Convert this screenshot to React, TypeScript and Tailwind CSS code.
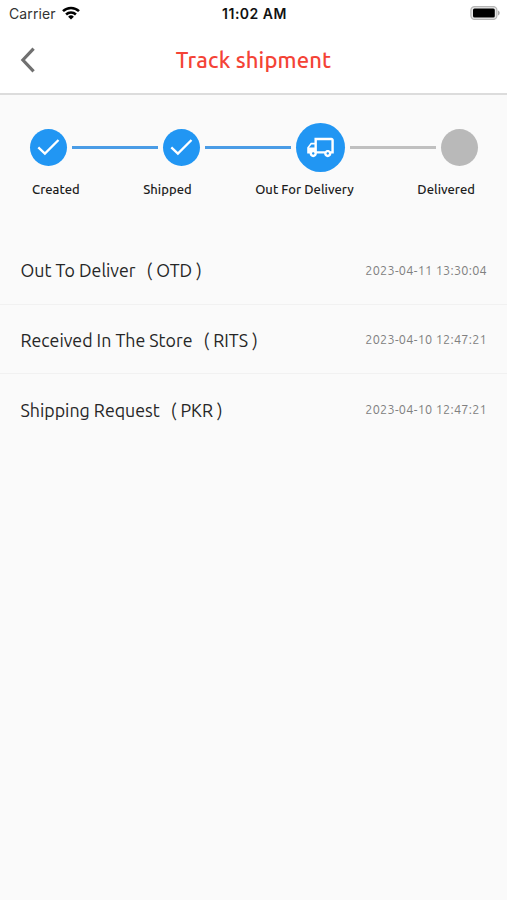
import React from 'react';
import { MdOutlineLocalShipping } from 'react-icons/md';

interface ShipmentEvent {
  title: string;
  code: string;
  date: string;
}

const events: ShipmentEvent[] = [
  { title: 'Out To Deliver', code: '( OTD )', date: '2023-04-11 13:30:04' },
  { title: 'Received In The Store', code: '( RITS )', date: '2023-04-10 12:47:21' },
  { title: 'Shipping Request', code: '( PKR )', date: '2023-04-10 12:47:21' },
];

const StatusBar: React.FC = () => (
  <div className="grid h-[27px] grid-cols-3 items-center pl-[9px] pr-[7px] font-['Inter','Liberation_Sans',sans-serif] text-[#111]">
    <div className="flex items-center gap-[6px]">
      <span className="text-[14px] leading-none tracking-[0.1px] text-[#333]">Carrier</span>
      <svg className="mb-[2px]" width="18" height="14" viewBox="0 0 18 14" fill="none" stroke="#000" strokeWidth="2.5">
        <path d="M1 5.2a11.3 11.3 0 0 1 16 0" />
        <path d="M4.1 8.5a6.9 6.9 0 0 1 9.8 0" />
        <path d="M9 13.6 6.1 10.7a4.1 4.1 0 0 1 5.8 0z" fill="#000" stroke="none" />
      </svg>
    </div>
    <span className="text-center text-[14px] font-semibold leading-none tracking-[0.5px]">11:02 AM</span>
    <svg className="mb-[2px] ml-auto" width="30" height="14" viewBox="0 0 30 14">
      <rect x="0.9" y="0.6" width="26" height="12.8" rx="3.6" fill="#e8e8e8" stroke="#b5b5b5" strokeWidth="1.2" />
      <rect x="3" y="2.6" width="21.8" height="8.8" rx="1.5" fill="#000" />
      <path d="M28 4.6c1.1.4 1.7 1.3 1.7 2.4S29.1 9 28 9.4z" fill="#aaa" />
    </svg>
  </div>
);

const Header: React.FC = () => (
  <header className="grid h-[66px] grid-cols-[40px_1fr_40px] items-center bg-white px-[20px]">
    <button aria-label="Back" className="block">
      <svg width="16" height="26" viewBox="0 0 16 26" fill="none" stroke="#707070" strokeWidth="3.2">
        <path d="M13.6 1.7 2.9 13 13.6 24.3" />
      </svg>
    </button>
    <h1 className="whitespace-nowrap pb-[2px] text-center text-[22px] font-medium tracking-[0.15px] text-[#f44336]">
      Track shipment
    </h1>
  </header>
);

const DoneStep: React.FC = () => (
  <div className="flex size-[37px] shrink-0 items-center justify-center rounded-full bg-[#2196f3]">
    <svg width="23" height="18" viewBox="0 0 23 18" fill="none" stroke="#fff" strokeWidth="2.3">
      <path d="M1.3 9.3 7.9 15.6 21.5 2" />
    </svg>
  </div>
);

const Stepper: React.FC = () => (
  <section className="h-[140px] pt-[27px]">
    <div className="flex h-[50px] items-center gap-[5px] pl-[30px] pr-[29px]">
      <DoneStep />
      <div className="h-[3px] flex-1 bg-[#4a9ce6]" />
      <DoneStep />
      <div className="h-[3px] flex-1 bg-[#4a9ce6]" />
      <div className="flex size-[49px] shrink-0 items-center justify-center rounded-full bg-[#2196f3]">
        <MdOutlineLocalShipping className="size-[29px] -scale-x-100 text-white" />
      </div>
      <div className="h-[3px] flex-1 bg-[#c0c0c0]" />
      <div className="size-[37px] shrink-0 rounded-full bg-[#b9b9b9]" />
    </div>
    <div className="mt-[8px] flex justify-between whitespace-nowrap px-[32px] text-[13px] font-medium leading-[18px] tracking-[0.03px] text-[#1c1c1c]">
      <span>Created</span>
      <span>Shipped</span>
      <span>Out For Delivery</span>
      <span>Delivered</span>
    </div>
  </section>
);

export default function App() {
  return (
    <div className="min-h-screen bg-[#fafafa] font-['Ubuntu','Noto_Sans',sans-serif]">
      <div className="border-b-2 border-[#dcdcdc] bg-white">
        <StatusBar />
        <Header />
      </div>
      <Stepper />
      <ul>
        {events.map((event) => (
          <li
            key={event.code}
            className="flex h-[69.5px] items-center justify-between whitespace-nowrap border-b border-[#f1f1f1] pl-[20.5px] pr-[20px] last:border-b-0"
          >
            <div className="flex gap-[11px] pt-[3px] text-[17.8px] text-[#262626]">
              <span>{event.title}</span>
              <span>{event.code}</span>
            </div>
            <span className="pt-[2px] text-[12.7px] tracking-[0.27px] text-[#808080]">{event.date}</span>
          </li>
        ))}
      </ul>
    </div>
  );
}
